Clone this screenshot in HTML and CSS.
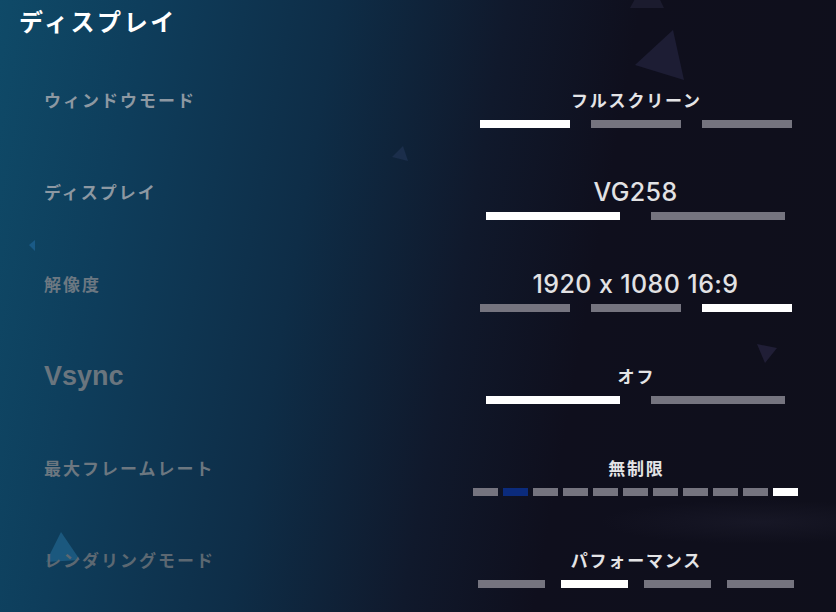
FILE: index.html
```html
<!DOCTYPE html>
<html lang="ja">
<head>
<meta charset="utf-8">
<link rel="stylesheet" href="styles.css">
</head>
<body>
<div class="screen">
  <svg class="deco" width="836" height="612" viewBox="0 0 836 612" aria-hidden="true">
    <polygon points="648,-25 630,8 664,8" fill="#1b1b2e"/>
    <polygon points="673,30 635,65 684,80" fill="#1d1d34"/>
    <polygon points="403,146 392,157 408,161" fill="#1b2e4b"/>
    <polygon points="29,245 35,240 35,251" fill="#1a5a86"/>
    <polygon points="757,344 777,348 765,363" fill="#201e36"/>
    <polygon points="61,532 46,562 80,560" fill="#1b587e"/>
  </svg>
  <h1 class="title">ディスプレイ</h1>
  <div class="rows">
    <div class="row">
      <div class="label l1">ウィンドウモード</div>
      <div class="value">
        <div class="val-text jp">フルスクリーン</div>
        <div class="bars three">
          <span class="bar on"></span><span class="bar"></span><span class="bar"></span>
        </div>
      </div>
    </div>
    <div class="row">
      <div class="label l1">ディスプレイ</div>
      <div class="value">
        <div class="val-text lat">VG258</div>
        <div class="bars two">
          <span class="bar on"></span><span class="bar"></span>
        </div>
      </div>
    </div>
    <div class="row">
      <div class="label l2">解像度</div>
      <div class="value">
        <div class="val-text lat">1920 x 1080 16:9</div>
        <div class="bars three">
          <span class="bar"></span><span class="bar"></span><span class="bar on"></span>
        </div>
      </div>
    </div>
    <div class="row">
      <div class="label vsync">Vsync</div>
      <div class="value">
        <div class="val-text jp">オフ</div>
        <div class="bars two">
          <span class="bar on"></span><span class="bar"></span>
        </div>
      </div>
    </div>
    <div class="row">
      <div class="label l3">最大フレームレート</div>
      <div class="value">
        <div class="val-text jp">無制限</div>
        <div class="bars eleven">
          <span class="bar"></span><span class="bar blue"></span><span class="bar"></span><span class="bar"></span><span class="bar"></span><span class="bar"></span><span class="bar"></span><span class="bar"></span><span class="bar"></span><span class="bar"></span><span class="bar on"></span>
        </div>
      </div>
    </div>
    <div class="row">
      <div class="label l4">レンダリングモード</div>
      <div class="value">
        <div class="val-text jp">パフォーマンス</div>
        <div class="bars four">
          <span class="bar"></span><span class="bar on"></span><span class="bar"></span><span class="bar"></span>
        </div>
      </div>
    </div>
  </div>
</div>
</body>
</html>
```
FILE: styles.css
```css
html, body {
  margin: 0;
  padding: 0;
}
body {
  width: 836px;
  height: 612px;
  overflow: hidden;
  background: #0f0f1b;
  font-family: "Noto Sans CJK JP", "Noto Sans", sans-serif;
}
.screen {
  position: relative;
  width: 836px;
  height: 612px;
  overflow: hidden;
  background:
    radial-gradient(ellipse 160px 22px at 760px 522px, rgba(60,60,85,0.18), rgba(60,60,85,0) 100%),
    linear-gradient(100deg, #0f4a68 0%, #0e3d5b 16%, #0e2d47 36%, #10192c 54%, #0f0f1d 68%, #0f0f1b 100%);
}
.deco {
  position: absolute;
  left: 0;
  top: 0;
  z-index: 0;
}
.title {
  position: relative;
  z-index: 1;
  margin: 0;
  padding: 6px 0 0 19px;
  height: 80px;
  box-sizing: border-box;
  font-size: 24px;
  line-height: 30px;
  font-weight: 700;
  letter-spacing: 2.6px;
  color: #ffffff;
}
.rows {
  position: relative;
  z-index: 1;
  margin-top: 6px;
  display: flex;
  flex-direction: column;
}
.row {
  height: 92px;
  display: grid;
  grid-template-columns: 416px 351px;
  padding-left: 44px;
  align-items: start;
}
.label {
  height: 28px;
  line-height: 28px;
  font-size: 17px;
  font-weight: 700;
  letter-spacing: 2px;
  white-space: nowrap;
}
.l1 { color: #8d98a2; }
.l2 { color: #6c7882; }
.l3 { color: #6c7780; }
.l4 { color: #5c6872; }
.vsync {
  font-family: "Liberation Sans", Arial, sans-serif;
  font-size: 27px;
  letter-spacing: 0;
  color: #6a757e;
}
.value {
  display: flex;
  flex-direction: column;
  align-items: center;
  gap: 6px;
}
.val-text {
  height: 28px;
  line-height: 28px;
  color: #e4e4e6;
  white-space: nowrap;
}
.val-text.jp {
  font-size: 17px;
  font-weight: 700;
  letter-spacing: 1.8px;
  padding-left: 1.8px;
}
.val-text.lat {
  font-family: "Inter", "Liberation Sans", sans-serif;
  font-size: 25px;
  font-weight: 500;
  letter-spacing: 0.4px;
  font-feature-settings: "calt" 0;
  color: #e2e2e4;
}
.bars {
  display: flex;
  height: 8px;
}
.bar {
  display: block;
  height: 8px;
  background: #75747f;
}
.bar.on { background: #ffffff; }
.bar.blue { background: #0b2b7c; }
.bars.three { gap: 21px; }
.bars.three .bar { width: 90px; }
.bars.two { gap: 31px; }
.bars.two .bar { width: 134px; }
.bars.eleven { gap: 5.5px; }
.bars.eleven .bar { width: 24.5px; }
.bars.four { gap: 16px; }
.bars.four .bar { width: 67px; }
```
